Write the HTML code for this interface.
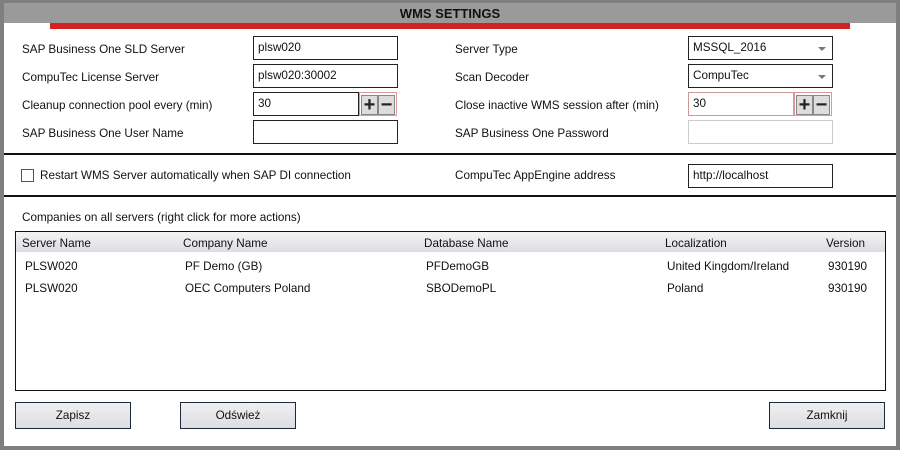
<!DOCTYPE html>
<html><head><meta charset="utf-8"><style>
*{margin:0;padding:0;box-sizing:border-box}
body{width:900px;height:450px;background:#7f7f7f;position:relative;font-family:"Liberation Sans",sans-serif;font-size:11.7px;color:#111;overflow:hidden}
.win{position:absolute;left:4px;top:3px;width:892px;height:443px;background:#fff}
.hdr{position:absolute;left:4px;top:3px;width:892px;height:20px;background:#9a9a9a;text-align:center;font-weight:bold;font-size:13px;line-height:22px;color:#111}
.red{position:absolute;left:50px;top:23px;width:800px;height:6px;background:#d52121}
.a{position:absolute;white-space:nowrap}
.in{position:absolute;border:1px solid #222;background:#fff;height:24px;line-height:22px;padding-left:4px}
.sp{position:absolute;width:38px;height:24px;border:1px solid #d99;background:#fff}
.sp div{position:absolute;top:2px;width:17px;height:20px;background:#ddd;border:1px solid #888;font-weight:bold;font-size:20px;line-height:18px;text-align:center;color:#222}
.arr{position:absolute;right:6px;top:10px;border-left:4px solid transparent;border-right:4px solid transparent;border-top:4px solid #777}
.hr{position:absolute;left:4px;width:892px;height:2px;background:#111}
.btn{position:absolute;height:27px;border:1px solid #1a2a3a;background:linear-gradient(#f0f0f2,#dcdde2);text-align:center;line-height:25px}
</style></head><body>
<div class="win"></div>
<div class="hdr">WMS SETTINGS</div>
<div class="red"></div>

<div class="a" style="left:22px;top:43px">SAP Business One SLD Server</div>
<div class="a" style="left:22px;top:71px">CompuTec License Server</div>
<div class="a" style="left:22px;top:99px">Cleanup connection pool every (min)</div>
<div class="a" style="left:22px;top:127px">SAP Business One User Name</div>
<div class="in" style="left:253px;top:36px;width:145px">plsw020</div>
<div class="in" style="left:253px;top:64px;width:145px">plsw020:30002</div>
<div class="in" style="left:253px;top:92px;width:106px">30</div>
<div class="sp" style="left:359px;top:92px"><div style="left:1px">+</div><div style="left:18px">−</div></div>
<div class="in" style="left:253px;top:120px;width:145px"></div>

<div class="a" style="left:455px;top:43px">Server Type</div>
<div class="a" style="left:455px;top:71px">Scan Decoder</div>
<div class="a" style="left:455px;top:99px">Close inactive WMS session after (min)</div>
<div class="a" style="left:455px;top:127px">SAP Business One Password</div>
<div class="in" style="left:688px;top:36px;width:145px">MSSQL_2016<span class="arr"></span></div>
<div class="in" style="left:688px;top:64px;width:145px">CompuTec<span class="arr"></span></div>
<div class="in" style="left:688px;top:92px;width:106px;border-color:#c99">30</div>
<div class="sp" style="left:794px;top:92px"><div style="left:1px">+</div><div style="left:18px">−</div></div>
<div class="in" style="left:688px;top:120px;width:145px;border-color:#ccc"></div>

<div class="hr" style="top:153px"></div>
<div class="a" style="left:21px;top:169px;width:13px;height:13px;border:1px solid #555"></div>
<div class="a" style="left:40px;top:169px">Restart WMS Server automatically when SAP DI connection</div>
<div class="a" style="left:455px;top:169px">CompuTec AppEngine address</div>
<div class="in" style="left:688px;top:164px;width:145px">http://localhost</div>
<div class="hr" style="top:195px"></div>

<div class="a" style="left:22px;top:211px">Companies on all servers (right click for more actions)</div>
<div class="a" style="left:15px;top:231px;width:871px;height:160px;border:1px solid #111;background:#fff"></div>
<div class="a" style="left:16px;top:232px;width:869px;height:20px;background:linear-gradient(#f4f4f6,#dcdde2)"></div>
<div class="a" style="left:22px;top:237px">Server Name</div>
<div class="a" style="left:183px;top:237px">Company Name</div>
<div class="a" style="left:424px;top:237px">Database Name</div>
<div class="a" style="left:665px;top:237px">Localization</div>
<div class="a" style="left:826px;top:237px">Version</div>
<div class="a" style="left:25px;top:260px">PLSW020</div>
<div class="a" style="left:185px;top:260px">PF Demo (GB)</div>
<div class="a" style="left:426px;top:260px">PFDemoGB</div>
<div class="a" style="left:667px;top:260px">United Kingdom/Ireland</div>
<div class="a" style="left:828px;top:260px">930190</div>
<div class="a" style="left:25px;top:282px">PLSW020</div>
<div class="a" style="left:185px;top:282px">OEC Computers Poland</div>
<div class="a" style="left:426px;top:282px">SBODemoPL</div>
<div class="a" style="left:667px;top:282px">Poland</div>
<div class="a" style="left:828px;top:282px">930190</div>

<div class="btn" style="left:15px;top:402px;width:116px">Zapisz</div>
<div class="btn" style="left:180px;top:402px;width:116px">Odśwież</div>
<div class="btn" style="left:769px;top:402px;width:116px">Zamknij</div>
</body></html>
